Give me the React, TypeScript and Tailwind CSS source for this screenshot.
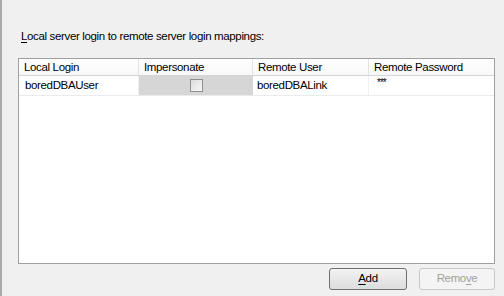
const columns = [
  { key: "login", label: "Local Login", width: "w-[120px]" },
  { key: "imp", label: "Impersonate", width: "w-[114px]" },
  { key: "user", label: "Remote User", width: "w-[116px]" },
  { key: "pwd", label: "Remote Password", width: "flex-1" },
];

export default function App() {
  return (
    <div
      className="w-[504px] h-[296px] bg-[#f0f0f0] border-l-2 border-[#a9a9a9] flex flex-col text-[11.5px] tracking-[-0.35px] text-black"
      style={{ fontFamily: '"Liberation Sans", Arial, sans-serif' }}
    >
      {/* Label */}
      <div className="pl-[19px] pt-[28px] h-[58px]">
        <span className="underline underline-offset-2">L</span>ocal server login to remote server login mappings:
      </div>

      {/* Grid */}
      <div className="ml-[16px] w-[477px] h-[206px] border border-[#a0a0a0] bg-white flex flex-col">
        <div className="flex h-[17px] border-b border-[#d5d5d5] bg-gradient-to-b from-white to-[#f7f7f7]">
          {columns.map((c) => (
            <div
              key={c.key}
              className={`${c.width} border-r border-[#e3e3e3] last:border-r-0 pl-[5px] leading-[17px]`}
            >
              {c.label}
            </div>
          ))}
        </div>
        <div className="flex h-[20px] border-b border-[#ebebeb]">
          <div className="w-[120px] pl-[6px] leading-[19px] border-r border-[#f0f0f0]">boredDBAUser</div>
          <div className="w-[114px] bg-[#d6d6d6] flex items-center justify-center">
            <div className="w-[13px] h-[13px] border border-[#8f8f8f] bg-gradient-to-br from-[#dcdcdc] to-[#f8f8f8]" />
          </div>
          <div className="w-[116px] pl-[4px] leading-[19px] border-r border-[#f0f0f0]">boredDBALink</div>
          <div className="flex-1 pl-[8px] leading-[14px] text-[10px] tracking-[-1px]">***</div>
        </div>
      </div>

      {/* Buttons */}
      <div className="flex justify-end gap-[12px] pr-[9px] pt-[4px]">
        <button className="w-[78px] h-[22px] rounded-[3px] border border-[#707070] bg-gradient-to-b from-[#f2f2f2] to-[#dddddd]">
          <span className="underline underline-offset-2">A</span>dd
        </button>
        <button className="w-[76px] h-[22px] rounded-[3px] border border-[#c8c8c8] bg-[#f4f4f4] text-[#a0a0a0]">
          Remo<span className="underline underline-offset-2">v</span>e
        </button>
      </div>
    </div>
  );
}
